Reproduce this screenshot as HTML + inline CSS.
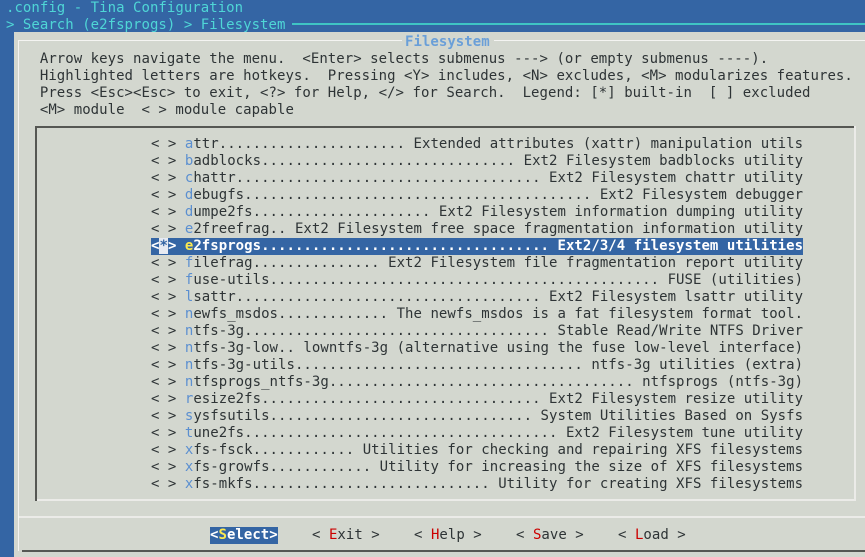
<!DOCTYPE html>
<html><head><meta charset="utf-8"><style>
html,body{margin:0;padding:0}
body{width:865px;height:557px;background:#3465a4;position:relative;overflow:hidden;font-family:"DejaVu Sans Mono","Liberation Mono",monospace;font-size:14px}
.r{position:absolute;left:6px;white-space:pre;line-height:17px;height:17px;color:#2e3436;letter-spacing:0.04px}
.c{color:#4fd6d6}
.h{color:#5b8fd0}
.k{color:#cc0000}
#dlg{position:absolute;left:14px;top:32px;width:851px;height:525px;background:#d3d7cf}
.ln{position:absolute}
.sel{background:#3465a4;color:#fff;font-weight:bold}
.y{color:#fce94f}
</style></head><body>
<div class="r c" style="top:0">.config - Tina Configuration</div>
<div class="r c" style="top:17px">&gt; Search (e2fsprogs) &gt; Filesystem</div>
<div class="ln" style="left:292px;top:23px;width:573px;height:2px;background:#3fc4c4"></div>
<div id="dlg"></div>
<div class="ln" style="left:18px;top:40px;width:847px;height:1px;background:#f4f4f2"></div>
<div class="ln" style="left:18px;top:40px;width:1px;height:511px;background:#f4f4f2"></div>
<div class="ln" style="left:22px;top:550px;width:843px;height:2px;background:#555753"></div>
<div class="ln" style="left:402px;top:34px;width:92px;height:14px;background:#d3d7cf"></div>
<div class="r" style="top:34px;left:405px;color:#6a9fd8;font-weight:bold">Filesystem</div>
<div class="r" style="top:51px">    Arrow keys navigate the menu.  &lt;Enter&gt; selects submenus ---&gt; (or empty submenus ----).</div>
<div class="r" style="top:68px">    Highlighted letters are hotkeys.  Pressing &lt;Y&gt; includes, &lt;N&gt; excludes, &lt;M&gt; modularizes features.</div>
<div class="r" style="top:85px">    Press &lt;Esc&gt;&lt;Esc&gt; to exit, &lt;?&gt; for Help, &lt;/&gt; for Search.  Legend: [*] built-in  [ ] excluded</div>
<div class="r" style="top:102px">    &lt;M&gt; module  &lt; &gt; module capable</div>
<div class="ln" style="left:35px;top:126px;width:820px;height:2px;background:#555753"></div>
<div class="ln" style="left:35px;top:126px;width:2px;height:375px;background:#555753"></div>
<div class="ln" style="left:37px;top:499px;width:818px;height:2px;background:#ebebe8"></div>
<div class="ln" style="left:854px;top:126px;width:2px;height:375px;background:#ebebe8"></div>
<div class="ln" style="left:19px;top:516px;width:846px;height:2px;background:#ebebe8"></div>

<div class="r" style="top:136px;left:151px">&lt; &gt; <span class="h">a</span>ttr...................... Extended attributes (xattr) manipulation utils</div>
<div class="r" style="top:153px;left:151px">&lt; &gt; <span class="h">b</span>adblocks.............................. Ext2 Filesystem badblocks utility</div>
<div class="r" style="top:170px;left:151px">&lt; &gt; <span class="h">c</span>hattr.................................... Ext2 Filesystem chattr utility</div>
<div class="r" style="top:187px;left:151px">&lt; &gt; <span class="h">d</span>ebugfs......................................... Ext2 Filesystem debugger</div>
<div class="r" style="top:204px;left:151px">&lt; &gt; <span class="h">d</span>umpe2fs..................... Ext2 Filesystem information dumping utility</div>
<div class="r" style="top:221px;left:151px">&lt; &gt; <span class="h">e</span>2freefrag.. Ext2 Filesystem free space fragmentation information utility</div>
<div class="r sel" style="top:238px;left:151px;width:652px">&lt;<span style="background:#e6eaf2;color:#3465a4">*</span>&gt; <span class="y">e</span>2fsprogs.................................. Ext2/3/4 filesystem utilities</div>
<div class="r" style="top:255px;left:151px">&lt; &gt; <span class="h">f</span>ilefrag............... Ext2 Filesystem file fragmentation report utility</div>
<div class="r" style="top:272px;left:151px">&lt; &gt; <span class="h">f</span>use-utils.............................................. FUSE (utilities)</div>
<div class="r" style="top:289px;left:151px">&lt; &gt; <span class="h">l</span>sattr.................................... Ext2 Filesystem lsattr utility</div>
<div class="r" style="top:306px;left:151px">&lt; &gt; <span class="h">n</span>ewfs_msdos............. The newfs_msdos is a fat filesystem format tool.</div>
<div class="r" style="top:323px;left:151px">&lt; &gt; <span class="h">n</span>tfs-3g.................................... Stable Read/Write NTFS Driver</div>
<div class="r" style="top:340px;left:151px">&lt; &gt; <span class="h">n</span>tfs-3g-low.. lowntfs-3g (alternative using the fuse low-level interface)</div>
<div class="r" style="top:357px;left:151px">&lt; &gt; <span class="h">n</span>tfs-3g-utils.................................. ntfs-3g utilities (extra)</div>
<div class="r" style="top:374px;left:151px">&lt; &gt; <span class="h">n</span>tfsprogs_ntfs-3g.................................... ntfsprogs (ntfs-3g)</div>
<div class="r" style="top:391px;left:151px">&lt; &gt; <span class="h">r</span>esize2fs................................. Ext2 Filesystem resize utility</div>
<div class="r" style="top:408px;left:151px">&lt; &gt; <span class="h">s</span>ysfsutils............................... System Utilities Based on Sysfs</div>
<div class="r" style="top:425px;left:151px">&lt; &gt; <span class="h">t</span>une2fs..................................... Ext2 Filesystem tune utility</div>
<div class="r" style="top:442px;left:151px">&lt; &gt; <span class="h">x</span>fs-fsck............ Utilities for checking and repairing XFS filesystems</div>
<div class="r" style="top:459px;left:151px">&lt; &gt; <span class="h">x</span>fs-growfs............ Utility for increasing the size of XFS filesystems</div>
<div class="r" style="top:476px;left:151px">&lt; &gt; <span class="h">x</span>fs-mkfs............................ Utility for creating XFS filesystems</div>

<div class="r sel" style="top:527px;left:210px">&lt;<span class="y">S</span>elect&gt;</div>
<div class="r" style="top:527px;left:312px">&lt; <span class="k">E</span>xit &gt;</div>
<div class="r" style="top:527px;left:414px">&lt; <span class="k">H</span>elp &gt;</div>
<div class="r" style="top:527px;left:516px">&lt; <span class="k">S</span>ave &gt;</div>
<div class="r" style="top:527px;left:618px">&lt; <span class="k">L</span>oad &gt;</div>
</body></html>
